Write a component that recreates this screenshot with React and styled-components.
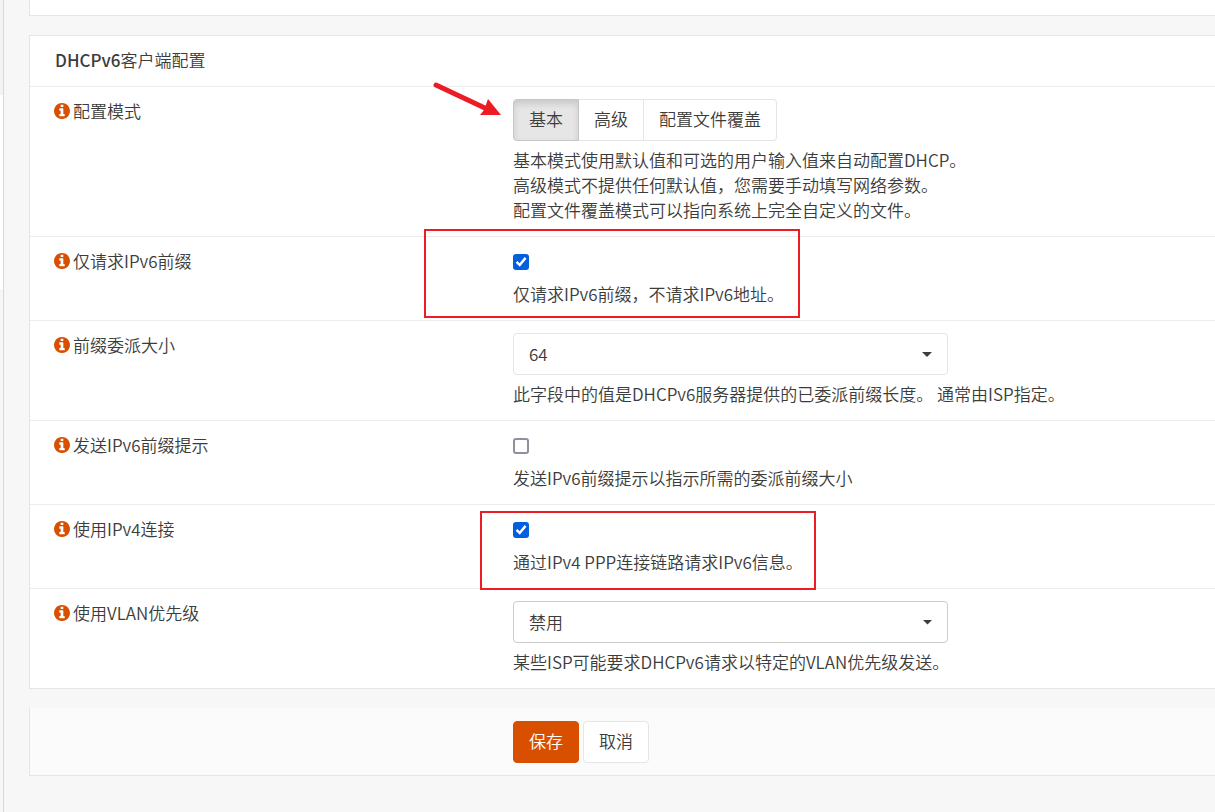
import { useState } from "react";
import styled, { createGlobalStyle } from "styled-components";

const GlobalStyle = createGlobalStyle`
  * {
    box-sizing: border-box;
  }

  body {
    margin: 0;
    background: #f7f7f7;
    color: #3c3c3b;
    font-family: "Noto Sans CJK SC", sans-serif;
    font-size: 17px;
    font-weight: 350;
    line-height: 25px;
  }

  button,
  select {
    font: inherit;
    color: inherit;
  }
`;

const Page = styled.div`
  display: flex;
  min-height: 100vh;
  overflow-x: hidden;
`;

const Sidebar = styled.aside`
  display: flex;
  flex-direction: column;
  flex: none;
  width: 4px;
  border-right: 1px solid #d9d9d9;
`;

const SidebarItem = styled.div`
  height: ${({ $height }) => $height}px;
  background: ${({ $active }) => ($active ? "#f3f3f3" : "#ffffff")};

  & + & {
    border-bottom: 1px solid #ececec;
  }
`;

const Main = styled.main`
  display: flex;
  flex: 1;
  flex-direction: column;
  gap: 19px;
  min-width: 0;
  padding-left: 25px;
`;

const Panel = styled.section`
  background: #ffffff;
  border: 1px solid #e5e5e5;
  border-right: 0;
`;

const PreviousPanel = styled(Panel)`
  height: 16px;
  border-top: 0;
`;

const PanelTitle = styled.h2`
  margin: 0;
  padding: 11px 25px 14px;
  border-bottom: 1px solid #ececec;
  font-size: inherit;
  font-weight: inherit;
  line-height: inherit;

  strong {
    font-weight: 500;
  }
`;

const Row = styled.div`
  display: grid;
  grid-template-columns: 459px minmax(0, 1fr);
  padding: 12px 0 14px 24px;

  & + & {
    border-top: 1px solid #ececec;
  }
`;

const Label = styled.label`
  display: flex;
  align-items: center;
  align-self: start;
  gap: 3px;
  margin-top: -1px;

  svg {
    fill: #d94f00;
  }
`;

const Field = styled.div`
  position: relative;
  display: flex;
  flex-direction: column;
  align-items: flex-start;
  gap: 6px;
`;

const Help = styled.p`
  margin: 0;
`;

const ModeGroup = styled.div`
  display: flex;
`;

const Button = styled.button`
  height: 42px;
  padding: 0 15px 3px;
  border: 1px solid ${({ $primary }) => ($primary ? "#d94f00" : "#e5e5e5")};
  border-radius: 4px;
  background: ${({ $primary }) => ($primary ? "#d94f00" : "#ffffff")};
  color: ${({ $primary }) => ($primary ? "#ffffff" : "inherit")};
`;

const ModeButton = styled(Button)`
  border-radius: 0;

  & + & {
    border-left: 0;
  }

  &:first-child {
    border-radius: 4px 0 0 4px;
  }

  &:last-child {
    border-radius: 0 4px 4px 0;
  }

  &[aria-pressed="true"] {
    background: #e6e6e6;
    border: 1px solid #c6c6c6;
    box-shadow: inset 0 4px 6px rgba(0, 0, 0, 0.125);
  }
`;

const CheckLine = styled.div`
  display: flex;
  align-items: center;
  height: 26px;
`;

const Checkbox = styled.input`
  display: grid;
  place-content: center;
  appearance: none;
  width: 16px;
  height: 16px;
  margin: 0;
  border: 2px solid #8f8f9d;
  border-radius: 3px;
  background: #ffffff;

  &:checked {
    border-color: #0060df;
    background: #0060df;
  }

  &:checked::before {
    content: "";
    width: 12px;
    height: 12px;
    background: #ffffff;
    clip-path: polygon(6% 56%, 20% 42%, 38% 60%, 80% 8%, 96% 22%, 40% 90%);
  }
`;

const SelectWrap = styled.div`
  position: relative;
  width: 100%;
  max-width: 435px;
`;

const Select = styled.select`
  display: block;
  appearance: none;
  width: 100%;
  height: 42px;
  padding: 0 40px 2px 15px;
  border: 1px solid ${({ $native }) => ($native ? "#cccccc" : "#e5e5e5")};
  border-radius: 4px;
  background: #ffffff;
`;

const Caret = styled.svg`
  position: absolute;
  top: 19px;
  right: 16px;
  pointer-events: none;
  fill: #3c3c3b;
`;

const Actions = styled.section`
  padding: 13px 0 12px 483px;
  display: flex;
  gap: 4px;
  background: #fbfbfb;
  border: 1px solid #e5e5e5;
  border-width: 0 0 1px 1px;
`;

const Highlight = styled.div`
  position: absolute;
  top: ${({ $top }) => $top}px;
  left: ${({ $left }) => $left}px;
  width: ${({ $width }) => $width}px;
  height: ${({ $height }) => $height}px;
  border: 2px solid #ed1c24;
  pointer-events: none;
`;

const Arrow = styled.svg`
  position: absolute;
  top: -17px;
  left: -80px;
  pointer-events: none;
`;

const MODES = ["基本", "高级", "配置文件覆盖"];

const InfoIcon = () => (
  <svg width="16" height="16" viewBox="128 128 1536 1536" aria-hidden="true">
    <path
      fillRule="evenodd"
      d="M1152 1376v-160q0-14-9-23t-23-9h-96v-512q0-14-9-23t-23-9h-320q-14 0-23 9t-9 23v160q0 14 9 23t23 9h96v320h-96q-14 0-23 9t-9 23v160q0 14 9 23t23 9h448q14 0 23-9t9-23zM1024 480v-160q0-14-9-23t-23-9h-192q-14 0-23 9t-9 23v160q0 14 9 23t23 9h192q14 0 23-9t9-23zM1664 896q0 209-103 385.500t-279.500 279.500-385.500 103-385.500-103-279.500-279.500-103-385.500 103-385.500 279.500-279.500 385.500-103 385.500 103 279.500 279.500 103 385.500z"
    />
  </svg>
);

const FieldLabel = ({ htmlFor, id, as, children }) => (
  <Label as={as} htmlFor={htmlFor} id={id}>
    <InfoIcon />
    {children}
  </Label>
);

const CheckRow = ({ id, label, help, defaultChecked, highlight }) => (
  <Row>
    <FieldLabel htmlFor={id}>{label}</FieldLabel>
    <Field>
      <CheckLine>
        <Checkbox id={id} type="checkbox" defaultChecked={defaultChecked} />
      </CheckLine>
      <Help>{help}</Help>
      {highlight && <Highlight {...highlight} />}
    </Field>
  </Row>
);

const SelectRow = ({ id, label, help, options, native }) => (
  <Row>
    <FieldLabel htmlFor={id}>{label}</FieldLabel>
    <Field>
      <SelectWrap>
        <Select id={id} $native={native}>
          {options.map((option) => (
            <option key={option}>{option}</option>
          ))}
        </Select>
        <Caret width="10" height="5" viewBox="0 0 10 5">
          <path d={native ? "M1 0h9L5.500 4.500z" : "M0 0h10L5 5z"} />
        </Caret>
      </SelectWrap>
      <Help>{help}</Help>
    </Field>
  </Row>
);

const App = () => {
  const [mode, setMode] = useState(MODES[0]);

  return (
    <Page>
      <GlobalStyle />
      <Sidebar>
        <SidebarItem $height={95} $active />
        <SidebarItem $height={196} />
      </Sidebar>
      <Main>
        <PreviousPanel />
        <Panel>
          <PanelTitle>
            <strong>DHCPv6</strong>客户端配置
          </PanelTitle>
          <Row>
            <FieldLabel as="div" id="mode-label">
              配置模式
            </FieldLabel>
            <Field>
              <ModeGroup role="group" aria-labelledby="mode-label">
                {MODES.map((name) => (
                  <ModeButton
                    key={name}
                    type="button"
                    aria-pressed={mode === name}
                    onClick={() => setMode(name)}
                  >
                    {name}
                  </ModeButton>
                ))}
              </ModeGroup>
              <Help>
                基本模式使用默认值和可选的用户输入值来自动配置DHCP。
                <br />
                高级模式不提供任何默认值，您需要手动填写网络参数。
                <br />
                配置文件覆盖模式可以指向系统上完全自定义的文件。
              </Help>
              <Arrow width="70" height="36" viewBox="0 0 70 36">
                <path
                  d="M3 3L54 27"
                  stroke="#ed1c24"
                  strokeWidth="5"
                  strokeLinecap="round"
                />
                <path d="M55 17L68 33L47 33L51 28z" fill="#ed1c24" />
              </Arrow>
            </Field>
          </Row>
          <CheckRow
            id="prefix-only"
            label="仅请求IPv6前缀"
            help="仅请求IPv6前缀，不请求IPv6地址。"
            defaultChecked
            highlight={{ $top: -20, $left: -89, $width: 376, $height: 89 }}
          />
          <SelectRow
            id="prefix-size"
            label="前缀委派大小"
            help="此字段中的值是DHCPv6服务器提供的已委派前缀长度。 通常由ISP指定。"
            options={["64", "63", "62", "60", "56", "48"]}
          />
          <CheckRow
            id="prefix-hint"
            label="发送IPv6前缀提示"
            help="发送IPv6前缀提示以指示所需的委派前缀大小"
          />
          <CheckRow
            id="use-ipv4"
            label="使用IPv4连接"
            help="通过IPv4 PPP连接链路请求IPv6信息。"
            defaultChecked
            highlight={{ $top: -6, $left: -33, $width: 336, $height: 79 }}
          />
          <SelectRow
            id="vlan-priority"
            label="使用VLAN优先级"
            help="某些ISP可能要求DHCPv6请求以特定的VLAN优先级发送。"
            options={["禁用", "0", "1", "2", "3", "4", "5", "6", "7"]}
            native
          />
        </Panel>
        <Actions>
          <Button type="submit" $primary>
            保存
          </Button>
          <Button type="button">取消</Button>
        </Actions>
      </Main>
    </Page>
  );
};

export default App;
